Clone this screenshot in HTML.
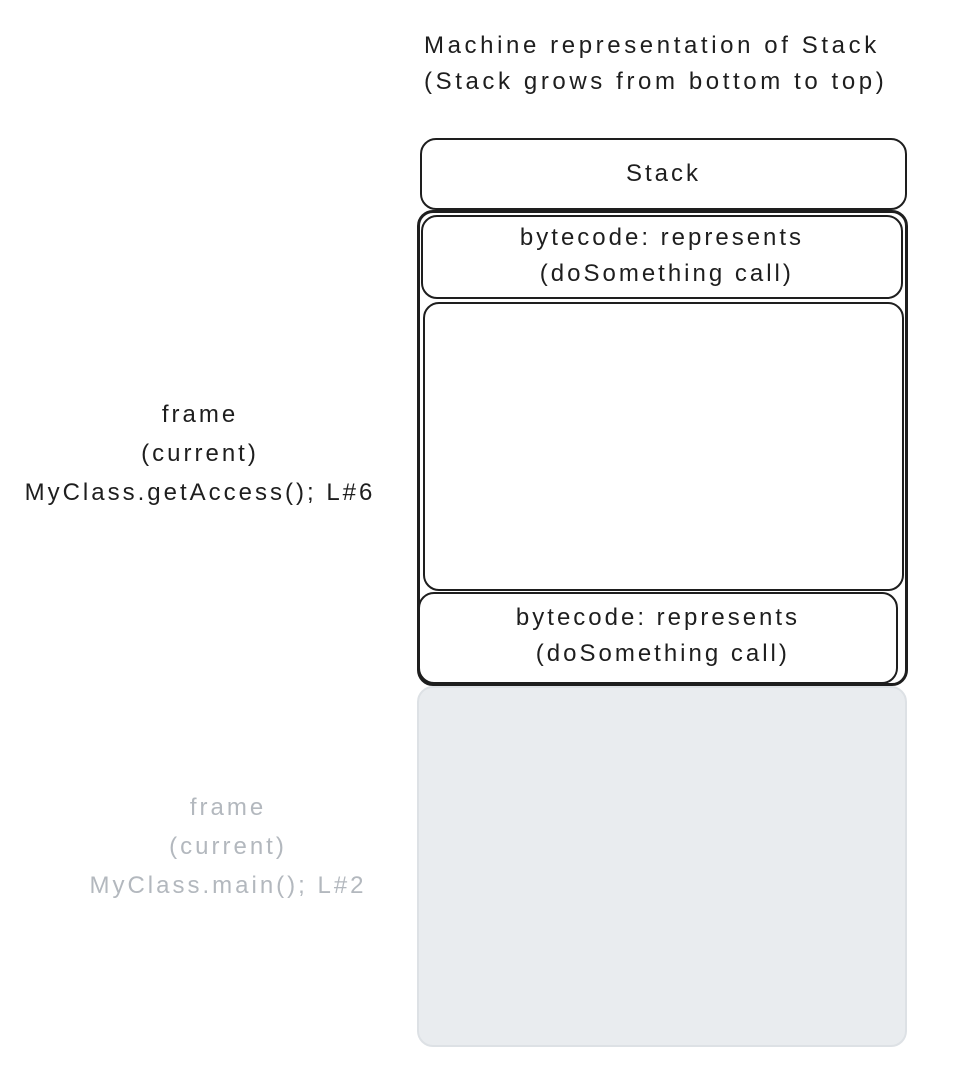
<!DOCTYPE html>
<html><head><meta charset="utf-8"><style>
body{margin:0;width:968px;height:1082px;background:#fff;position:relative;overflow:hidden;font-family:"Liberation Sans",sans-serif;color:#1e1e1e}
.b{position:absolute;box-sizing:border-box;border:2.5px solid #1e1e1e;border-radius:16px;background:#fff}
.t{position:absolute;font-size:24px;letter-spacing:3px;line-height:38px;text-align:center;white-space:nowrap}
</style></head><body>
<div class="t" style="left:424px;top:28px;text-align:left;line-height:36px;letter-spacing:3.6px">Machine representation of Stack<br>(Stack grows from bottom to top)</div>
<div class="b" style="left:420px;top:138px;width:487px;height:72px"></div>
<div class="t" style="left:420px;top:155px;width:487px">Stack</div>
<div class="b" style="left:417px;top:210px;width:491px;height:476px;border-width:3px"></div>
<div class="b" style="left:421px;top:215px;width:482px;height:84px"></div>
<div class="t" style="left:421px;top:220px;width:482px;line-height:36px">bytecode: represents<br>&nbsp;(doSomething call)</div>
<div class="b" style="left:423px;top:302px;width:481px;height:289px"></div>
<div class="b" style="left:418px;top:592px;width:480px;height:92px"></div>
<div class="t" style="left:418px;top:600px;width:480px;line-height:36px">bytecode: represents<br>&nbsp;(doSomething call)</div>
<div class="b" style="left:417px;top:686px;width:490px;height:361px;background:#e9ecef;border-color:#dde1e5"></div>
<div class="t" style="left:0;top:395px;width:400px;line-height:39px">frame<br>(current)<br>MyClass.getAccess(); L#6</div>
<div class="t" style="left:28px;top:788px;width:400px;line-height:39px;color:#b3b8be">frame<br>(current)<br>MyClass.main(); L#2</div>
</body></html>
